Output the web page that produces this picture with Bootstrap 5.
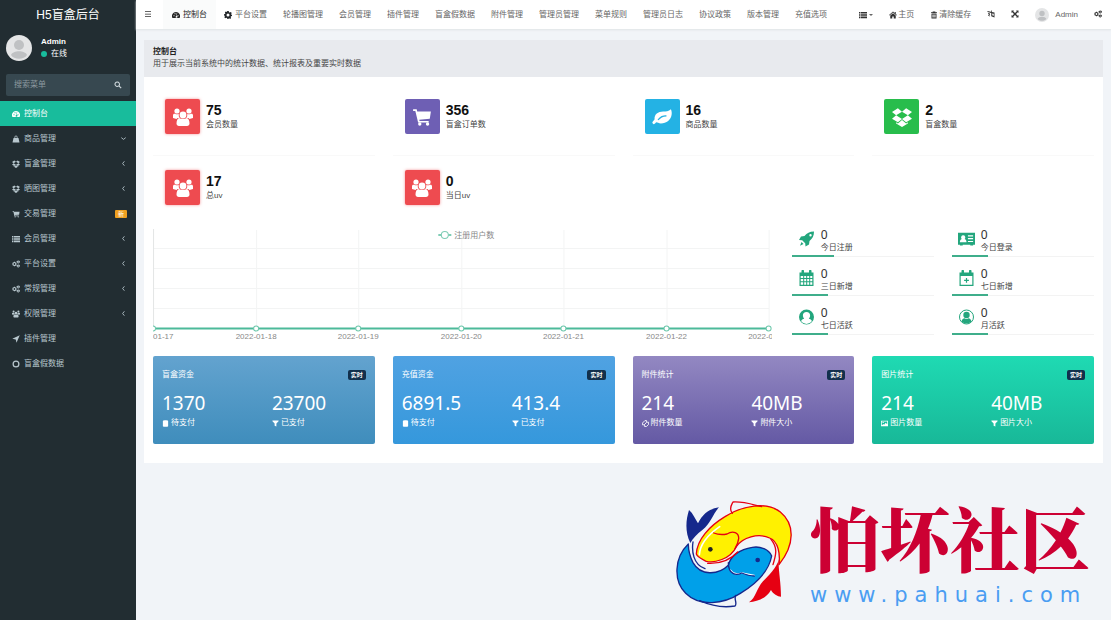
<!DOCTYPE html>
<html lang="zh-CN">
<head>
<meta charset="utf-8">
<meta name="viewport" content="width=device-width, initial-scale=1">
<title>H5盲盒后台</title>
<link href="https://cdn.jsdelivr.net/npm/bootstrap@5.3.0/dist/css/bootstrap.min.css" rel="stylesheet">
<style>
  body { font-family: "Liberation Sans", "Noto Sans CJK SC", sans-serif; font-size: 8px; line-height: 12px; color: #444; background: #f1f4f8; }
  a { color: inherit; text-decoration: none; }
  .ico { width: 8px; height: 8px; fill: currentColor; flex: none; }
  .side { width: 136px; flex: none; background: #222d32; color: #b8c7ce; }
  .side-brand { height: 29px; font-size: 12px; color: #fff; }
  .side-user { height: 38px; padding: 0 6px; gap: 9px; color: #fff; }
  .side-user .face { width: 26px; height: 26px; }
  .dot { width: 6px; height: 6px; background: #18bc9c; }
  .side-search { height: 22px; margin: 7px 6px 5px; padding: 0 8px; background: #374850; border-radius: 2px; color: #cfd8dc; }
  .side-search input { min-width: 0; border: 0; outline: 0; background: transparent; color: #fff; font-size: 8px; }
  .side-search input::placeholder { color: #8c999f; }
  .side-search button { border: 0; padding: 0; background: none; color: inherit; line-height: 0; }
  .side-menu a { height: 25px; padding: 0 9px 0 12px; gap: 4px; }
  .side-menu a.active { background: #18bc9c; color: #fff; }
  .side-menu .caret { width: 7px; height: 7px; fill: none; stroke: currentColor; }
  .tag-new { background: #f0a020; color: #fff; font-size: 6px; line-height: 8px; padding: 0 3px; border-radius: 1px; }
  .top { height: 29px; background: #fff; box-shadow: 0 1px 2px #dfe3e5; color: #666; }
  .top a, .top button { height: 29px; white-space: nowrap; }
  .top-tabs { gap: 16px; }
  .top-tabs a { gap: 3px; }
  .top-tabs .active { background: #fafbfb; color: #222; margin-left: -9px; padding: 0 9px; margin-right: -8px; }
  .top-tools { gap: 16px; padding-right: 9px; }
  .top-tools a { gap: 1px; }
  .top-tools .user { gap: 6px; }
  .top-tools .ico, .top .bars { color: #333; }
  .plain { border: 0; padding: 0; background: none; color: inherit; }
  .top .face { width: 14px; height: 14px; }
  .body-pad { padding: 11px 8px 0; }
  .intro { background: #e8eaee; padding: 6px 9px 8px; line-height: 11px; }
  .intro h1 { font-size: 8px; line-height: 12px; font-weight: 700; margin: 0; color: #222; }
  .panel { background: #fff; padding: 8px 9px 19px; }
  .quad { display: grid; grid-template-columns: repeat(4, 1fr); column-gap: 18px; }
  .stat { height: 71px; padding: 14px 12px 0; gap: 6px; align-items: flex-start; }
  .stat.ruled { box-shadow: 0 -1px 0 #f9f9f9 inset; }
  .tile { width: 35px; height: 35px; border-radius: 2px; color: #fff; flex: none; }
  .tile .ico { width: 20px; height: 20px; }
  .red { background: #ee4b50; box-shadow: 0 0 3px #ee4b5099; }
  .violet { background: #6e5fb4; }
  .sky { background: #24b2e4; }
  .green { background: #28bd4c; }
  .stat strong { display: block; font-size: 14px; line-height: 16px; color: #111; margin-top: 3px; }
  .stat div span { line-height: 14px; display: block; }
  .chart-row { display: grid; grid-template-columns: 618fr 322fr; }
  .chart-row svg.plot { width: 100%; display: block; margin-top: 1px; }
  .plot text { font-size: 8px; fill: #888; }
  .minis { display: grid; grid-template-columns: 1fr 1fr; column-gap: 18px; padding-left: 20px; margin-top: -9px; align-content: start; }
  .mini { height: 39px; padding: 10px 0 0 6px; gap: 6px; border-bottom: 1px solid #f3f3f3; position: relative; }
  .mini::after { content: ""; position: absolute; left: 0; bottom: -1px; width: 36px; height: 2px; background: #3fae8b; }
  .mini.wide::after { width: 42px; }
  .mini .ico { width: 17px; height: 16px; color: #23a67d; margin-top: 3px; }
  .mini b { display: block; font: 400 12px/14px "Noto Sans", sans-serif; color: #333; }
  .mini span { display: block; line-height: 11px; }
  .money { height: 88px; border-radius: 2px; color: #fff; padding: 12px 9px 0; }
  .money h2 { font-size: 8px; line-height: 14px; font-weight: 400; margin: 0; }
  .live { background: #12304c; font-size: 6px; line-height: 10px; padding: 0 3px; border-radius: 2px; font-weight: 700; }
  .money .fig { font: 400 19px/26px "Noto Sans", sans-serif; margin-top: 8px; }
  .money .cap { line-height: 14px; gap: 2px; }
  .money .ico { width: 7px; height: 7px; }
  .m1 { background: linear-gradient(#63a3cf, #3f8dbc); }
  .m2 { background: linear-gradient(#50a2e2, #3598dc); }
  .m3 { background: linear-gradient(#9388c2, #6459a4); }
  .m4 { background: linear-gradient(#1fdab3, #18b898); }
  .site { gap: 17px; padding: 0 21px 5px 0; }
  .site svg { width: 118px; height: 110px; }
  .site-name { font: 900 70px/76px "Noto Serif CJK SC", "Noto Sans CJK SC", serif; color: #cc0033; }
  .site-url { font: 400 21px/40px "DejaVu Sans", sans-serif; letter-spacing: 7px; color: #4a9df2; }
</style>
</head>
<body>
<svg class="d-none" xmlns="http://www.w3.org/2000/svg">
  <symbol id="i-dash" viewBox="0 0 16 16"><path fill-rule="evenodd" d="M8 2a8 8 0 0 0-7 12h14A8 8 0 0 0 8 2ZM3 8.500h2v2H3Zm2-4h2v2H5Zm6 4h2v2h-2ZM9.500 4l1 .5-1.500 5A2 2 0 1 1 7 12c0-1 .5-2 1.300-2.200Z"/></symbol>
  <symbol id="i-gear" viewBox="0 0 16 16"><path fill-rule="evenodd" d="M6.500 0h3l.5 2.300 1.500.7 2-1.200 2 2-1.200 2 .6 1.500L16 8v2l-2 .4-.7 1.500 1 2-2 2-2-1.300-1 .4-.5 1h-2L6 14l-1.500-.7-2 1L.7 12.500l1.100-2L1.500 9.500 0 9V6.500L2 6l.7-1.500-1-2 2-1.500 2 1.200Zm1.500 5a3 3 0 1 0 0 6 3 3 0 0 0 0-6Z"/></symbol>
  <symbol id="i-gears" viewBox="0 0 18 16"><path fill-rule="evenodd" d="M4.500 3h2l.4 1.500 1.300-.7L9.700 5.200 9 6.500l1.500.5v2L9 9.500l.7 1.300-1.500 1.500-1.300-.8L6.500 13h-2l-.4-1.500-1.300.7L1.300 10.800 2 9.500.5 9V7L2 6.500 1.300 5.200l1.500-1.400 1.300.7ZM5.500 6a2 2 0 1 0 0 4 2 2 0 0 0 0-4ZM13 0h2l.4 1.200 1.300-.3L18 2.500l-.8 1 .6 1.400-2.200.6L15 7h-2l-.6-1.500-1.900-.6.3-1.200-.8-1.200 1-1.500 1.500.3Zm1 2.200a1.300 1.300 0 1 0 0 2.600 1.300 1.300 0 0 0 0-2.600ZM13 9h2l.4 1.200 1.300-.3L18 11.500l-.8 1 .6 1.400-2.200.6L15 16h-2l-.6-1.500-1.900-.6.3-1.200-.8-1.200 1-1.500 1.500.3Zm1 2.200a1.300 1.300 0 1 0 0 2.600 1.300 1.300 0 0 0 0-2.600Z"/></symbol>
  <symbol id="i-bag" viewBox="0 0 16 16"><path d="M5 6V4a3 3 0 0 1 6 0v2h2l2 9H1l2-9Zm1.500 0h3V4a1.500 1.500 0 0 0-3 0Z" fill-rule="evenodd"/></symbol>
  <symbol id="i-box" viewBox="0 0 16 16"><path d="M4.700 1 8 3.700 3.300 6.600 0 4ZM11.300 1 16 4l-3.300 2.600L8 3.700ZM0 9.300l3.300-2.700L8 9.500l-3.300 2.700ZM16 9.300l-3.300-2.700L8 9.500l3.300 2.700ZM3.300 12.200l1.400.9L8 10.400l3.300 2.700 1.400-.9v1L8 16l-4.700-2.800Z"/></symbol>
  <symbol id="i-cart" viewBox="-1 -1 18 18"><path d="M0 1h3.200l.5 2H16l-1 6.500-9.500 1 .3 1H14V13H4.500L2 2.500H0Z"/><circle cx="6" cy="14.300" r="1.500"/><circle cx="13" cy="14.300" r="1.500"/></symbol>
  <symbol id="i-list" viewBox="0 0 16 16"><path d="M0 2h3v2.400H0Zm4 0h12v2.400H4ZM0 5.300h3v2.400H0Zm4 0h12v2.400H4ZM0 8.600h3V11H0Zm4 0h12V11H4ZM0 12h3v2.400H0Zm4 0h12v2.400H4Z"/></symbol>
  <symbol id="i-users" viewBox="0 0 20 18"><circle cx="4" cy="3" r="2.600"/><circle cx="16" cy="3" r="2.600"/><path d="M0 10V7.500C0 5.500 1.500 5.500 3 6.200h3C5.400 8 6 9.300 7 10H4.500L3.500 11ZM20 10V7.500c0-2-1.500-2-3-1.300h-3c.6 1.800 0 3.100-1 3.800h2.500l1 1Z"/><circle cx="10" cy="7" r="3.400"/><path d="M6.500 10c1 1 5 1.500 7 0 2 .3 3 2.500 3 5.500 0 1.500-1 2.500-2.500 2.500H6c-1.500 0-2.500-1-2.500-2.500 0-3 1-5.200 3-5.500Z"/></symbol>
  <symbol id="i-plane" viewBox="0 0 16 16"><path d="M15.500.5 9 15.500 7.500 9 .5 7.500Z"/></symbol>
  <symbol id="i-ring" viewBox="0 0 16 16"><path fill-rule="evenodd" d="M8 1a7 7 0 1 0 0 14A7 7 0 0 0 8 1Zm0 2.500a4.500 4.500 0 1 1 0 9 4.500 4.500 0 0 1 0-9Z"/></symbol>
  <symbol id="i-search" viewBox="0 0 16 16"><path fill-rule="evenodd" d="M6.500 1a5.500 5.500 0 1 0 3 10.100l4 4 1.700-1.700-4-4A5.500 5.500 0 0 0 6.500 1Zm0 2a3.500 3.500 0 1 1 0 7 3.500 3.500 0 0 1 0-7Z"/></symbol>
  <symbol id="i-bars" viewBox="0 0 16 16"><path d="M2 2.500h12V4H2Zm0 5h12V9H2Zm0 5h12V14H2Z"/></symbol>
  <symbol id="i-home" viewBox="0 0 16 16"><path d="M8 1 0 8l1 1 7-6 7 6 1-1-2.500-2.200V2h-2v2ZM8 4.300 2.500 9v6H6.500v-4h3v4h4V9Z"/></symbol>
  <symbol id="i-trash" viewBox="0 0 16 16"><path fill-rule="evenodd" d="M5.500 1h5l.5 1.500h3V4H2V2.500h3ZM3 5h10v10H3Zm2 2v6h1.500V7Zm2.300 0v6h1.400V7Zm2.200 0v6H11V7Z"/></symbol>
  <symbol id="i-lang" viewBox="0 0 16 16"><path d="M1 2 8 3.500V1h1.500v3L15 5v10L8.500 12.500V6L1 4ZM2 6l4 1v1.500L4.500 11 6 12v1L2 11l2-3-2-.5Zm8.500 1v4l1 .3V10l1 .3v1.500l1 .4V7.500Z" fill-rule="evenodd"/></symbol>
  <symbol id="i-expand" viewBox="0 0 16 16"><path d="M1 1h5L4.500 2.500 8 6l3.500-3.500L10 1h5v5l-1.500-1.500L10 8l3.500 3.500L15 10v5h-5l1.500-1.500L8 10l-3.500 3.500L6 15H1v-5l1.500 1.500L6 8 2.500 4.500 1 6Z"/></symbol>
  <symbol id="i-leaf" viewBox="0 0 18 16"><path fill-rule="evenodd" d="M17 1c-2 2-4.500 2-7 2C5.500 3 2 5.500 2.300 10c0 .8-2 2-2 3 0 .7.700 1.500 1.400 1.500 1 0 1.700-1.700 2.300-1.700 1 0 2 1 4 1 5 0 9.300-3.300 9.700-8.300C18 4 17.500 2 17 1ZM5 10.500c2.500-3.300 4.500-4 8-4v1c-3.500.2-5 1-7.200 3.500Z"/></symbol>
  <symbol id="i-rocket" viewBox="0 0 16 16"><path fill-rule="evenodd" d="M15.500.5C11 .5 8.500 2 6 5L2.500 5.500.5 9l3.200.2 3 3 .3 3.300 3.500-2 .5-3.500c3-2.500 4.500-5 4.500-9.500ZM12 3a1.200 1.200 0 1 1 0 2.400A1.200 1.200 0 0 1 12 3ZM3 11l2 2-3.500 1.700Z"/></symbol>
  <symbol id="i-idcard" viewBox="0 0 18 16"><path fill-rule="evenodd" d="M0 1.500h18v12.500h-2v.8h-3V14H5v.8H2V14H0ZM5.500 4a2.300 2.300 0 0 0-1.500 4C2.500 8.500 2 10 2 11.500h7C9 10 8.500 8.500 7 8a2.300 2.300 0 0 0-1.500-4ZM10.500 4v1.300H16V4Zm0 3v1.300H16V7Zm0 3v1.300H16V10Z"/></symbol>
  <symbol id="i-cal" viewBox="0 0 16 16"><path fill-rule="evenodd" d="M3 2.500V1a1.200 1.200 0 0 1 2.500 0v1.500h5V1A1.200 1.200 0 0 1 13 1v1.500h2V16H1V2.500ZM2.200 6v2h2.500V6Zm3.500 0v2h2V6Zm3 0v2h2V6Zm3 0v2h2.100V6ZM2.200 9v2.300h2.500V9Zm3.500 0v2.300h2V9Zm3 0v2.300h2V9Zm3 0v2.300h2.100V9ZM2.200 12.300v2.500h2.500v-2.500Zm3.500 0v2.500h2v-2.500Zm3 0v2.500h2v-2.500Zm3 0v2.500h2.100v-2.500Z"/></symbol>
  <symbol id="i-calplus" viewBox="0 0 16 16"><path fill-rule="evenodd" d="M3 2.500V1a1.200 1.200 0 0 1 2.500 0v1.500h5V1A1.200 1.200 0 0 1 13 1v1.500h2V16H1V2.500ZM2.200 6v8.800h11.600V6Zm5.200 2h1.200v1.800h1.800V11H8.600v1.800H7.400V11H5.600V9.800h1.800Z"/></symbol>
  <symbol id="i-face" viewBox="0 0 16 16"><path fill-rule="evenodd" d="M8 .5a7.500 7.500 0 1 0 0 15 7.500 7.500 0 0 0 0-15ZM8 3c2.300 0 3.600 1.500 3.600 3.500 0 1.300-.5 2.500-1.300 3.200 1.500.4 2.600 1 3.100 2.300A6.500 6.500 0 0 1 2.600 12c.5-1.300 1.600-1.900 3.100-2.300A4.500 4.500 0 0 1 4.400 6.500C4.400 4.500 5.700 3 8 3Z"/></symbol>
  <symbol id="i-person" viewBox="0 0 16 16"><circle cx="8" cy="8" r="7" fill="none" stroke="currentColor"/><circle cx="8" cy="6" r="3.200"/><path d="M3 12.500c.6-2.200 1.800-3 3-3.200 1 .8 3 .8 4 0 1.200.2 2.400 1 3 3.200a7 7 0 0 1-10 0Z"/></symbol>
  <symbol id="i-db" viewBox="0 0 16 16"><path d="M2 2c1-2 11-2 12 0v12c-1 2-11 2-12 0Z"/></symbol>
  <symbol id="i-filter" viewBox="0 0 16 16"><path d="M1 1h14v2l-5 5v7l-4-2V8L1 3Z"/></symbol>
  <symbol id="i-clip" viewBox="0 0 16 16"><path fill="none" stroke="currentColor" stroke-width="2" d="M1 7 7 1h3v5l-5 5H1Zm5 4v4h4l5-5V5h-4"/></symbol>
  <symbol id="i-image" viewBox="0 0 18 16"><path fill-rule="evenodd" d="M0 1h18v14H0Zm2 2v10l4-4 2 2 4-5 4 4V3Zm2 1h3v3H4Z"/></symbol>
  <symbol id="i-left" viewBox="0 0 8 8"><path d="M5 1.500 3 4l2 2.500"/></symbol>
  <symbol id="i-down" viewBox="0 0 8 8"><path d="M1.500 3 4 5l2.500-2"/></symbol>
  <symbol id="i-avatar" viewBox="0 0 26 26"><circle cx="13" cy="13" r="13" fill="#e4e5e6"/><circle cx="13" cy="10" r="5" fill="#bfc1c3"/><path d="M5 20c2-5 14-5 16 0-3 5-13 5-16 0Z" fill="#bfc1c3"/></symbol>
</svg>

<div class="d-flex min-vh-100">
  <aside class="side">
    <a href="#" class="side-brand d-flex align-items-center justify-content-center">H5盲盒后台</a>
    <div class="side-user d-flex align-items-center">
      <svg class="face"><use href="#i-avatar"/></svg>
      <div>
        <strong class="d-block">Admin</strong>
        <span class="d-flex align-items-center gap-1"><i class="dot rounded-circle"></i>在线</span>
      </div>
    </div>
    <form class="side-search d-flex align-items-center">
      <input class="flex-fill p-0" type="text" placeholder="搜索菜单" aria-label="搜索菜单">
      <button type="button" aria-label="搜索"><svg class="ico"><use href="#i-search"/></svg></button>
    </form>
    <nav class="side-menu d-flex flex-column">
      <a href="#" class="active d-flex align-items-center"><svg class="ico"><use href="#i-dash"/></svg>控制台</a>
      <a href="#" class="d-flex align-items-center"><svg class="ico"><use href="#i-bag"/></svg>商品管理<svg class="caret ms-auto"><use href="#i-down"/></svg></a>
      <a href="#" class="d-flex align-items-center"><svg class="ico"><use href="#i-box"/></svg>盲盒管理<svg class="caret ms-auto"><use href="#i-left"/></svg></a>
      <a href="#" class="d-flex align-items-center"><svg class="ico"><use href="#i-box"/></svg>晒图管理<svg class="caret ms-auto"><use href="#i-left"/></svg></a>
      <a href="#" class="d-flex align-items-center"><svg class="ico"><use href="#i-cart"/></svg>交易管理<span class="tag-new ms-auto">新</span></a>
      <a href="#" class="d-flex align-items-center"><svg class="ico"><use href="#i-list"/></svg>会员管理<svg class="caret ms-auto"><use href="#i-left"/></svg></a>
      <a href="#" class="d-flex align-items-center"><svg class="ico"><use href="#i-gears"/></svg>平台设置<svg class="caret ms-auto"><use href="#i-left"/></svg></a>
      <a href="#" class="d-flex align-items-center"><svg class="ico"><use href="#i-gears"/></svg>常规管理<svg class="caret ms-auto"><use href="#i-left"/></svg></a>
      <a href="#" class="d-flex align-items-center"><svg class="ico"><use href="#i-users"/></svg>权限管理<svg class="caret ms-auto"><use href="#i-left"/></svg></a>
      <a href="#" class="d-flex align-items-center"><svg class="ico"><use href="#i-plane"/></svg>插件管理</a>
      <a href="#" class="d-flex align-items-center"><svg class="ico"><use href="#i-ring"/></svg>盲盒假数据</a>
    </nav>
  </aside>

  <div class="flex-fill d-flex flex-column">
    <header class="top d-flex align-items-center justify-content-between">
      <div class="top-tabs d-flex align-items-center ps-2">
        <button class="plain bars me-1" type="button" aria-label="菜单"><svg class="ico"><use href="#i-bars"/></svg></button>
        <a href="#" class="active d-flex align-items-center"><svg class="ico"><use href="#i-dash"/></svg>控制台</a>
        <a href="#" class="d-flex align-items-center"><svg class="ico text-dark"><use href="#i-gear"/></svg>平台设置</a>
        <a href="#" class="d-flex align-items-center">轮播图管理</a>
        <a href="#" class="d-flex align-items-center">会员管理</a>
        <a href="#" class="d-flex align-items-center">插件管理</a>
        <a href="#" class="d-flex align-items-center">盲盒假数据</a>
        <a href="#" class="d-flex align-items-center">附件管理</a>
        <a href="#" class="d-flex align-items-center">管理员管理</a>
        <a href="#" class="d-flex align-items-center">菜单规则</a>
        <a href="#" class="d-flex align-items-center">管理员日志</a>
        <a href="#" class="d-flex align-items-center">协议政策</a>
        <a href="#" class="d-flex align-items-center">版本管理</a>
        <a href="#" class="d-flex align-items-center">充值选项</a>
      </div>
      <div class="top-tools d-flex align-items-center">
        <button class="plain dropdown-toggle d-flex align-items-center" type="button" aria-label="更多"><svg class="ico"><use href="#i-list"/></svg></button>
        <a href="#" class="d-flex align-items-center"><svg class="ico"><use href="#i-home"/></svg>主页</a>
        <a href="#" class="d-flex align-items-center"><svg class="ico"><use href="#i-trash"/></svg>清除缓存</a>
        <button class="plain" type="button" aria-label="语言"><svg class="ico"><use href="#i-lang"/></svg></button>
        <button class="plain" type="button" aria-label="全屏"><svg class="ico"><use href="#i-expand"/></svg></button>
        <a href="#" class="user d-flex align-items-center"><svg class="face"><use href="#i-avatar"/></svg>Admin</a>
        <button class="plain" type="button" aria-label="设置"><svg class="ico"><use href="#i-gears"/></svg></button>
      </div>
    </header>

    <main class="body-pad">
      <div class="intro">
        <h1>控制台</h1>
        用于展示当前系统中的统计数据、统计报表及重要实时数据
      </div>
      <div class="panel">
        <section class="quad">
          <div class="stat ruled d-flex"><span class="tile red d-flex align-items-center justify-content-center"><svg class="ico"><use href="#i-users"/></svg></span><div><strong>75</strong><span>会员数量</span></div></div>
          <div class="stat ruled d-flex"><span class="tile violet d-flex align-items-center justify-content-center"><svg class="ico"><use href="#i-cart"/></svg></span><div><strong>356</strong><span>盲盒订单数</span></div></div>
          <div class="stat ruled d-flex"><span class="tile sky d-flex align-items-center justify-content-center"><svg class="ico"><use href="#i-leaf"/></svg></span><div><strong>16</strong><span>商品数量</span></div></div>
          <div class="stat ruled d-flex"><span class="tile green d-flex align-items-center justify-content-center"><svg class="ico"><use href="#i-box"/></svg></span><div><strong>2</strong><span>盲盒数量</span></div></div>
          <div class="stat d-flex"><span class="tile red d-flex align-items-center justify-content-center"><svg class="ico"><use href="#i-users"/></svg></span><div><strong>17</strong><span>总uv</span></div></div>
          <div class="stat d-flex"><span class="tile red d-flex align-items-center justify-content-center"><svg class="ico"><use href="#i-users"/></svg></span><div><strong>0</strong><span>当日uv</span></div></div>
        </section>

        <section class="chart-row">
          <svg class="plot" viewBox="0 0 618 116" role="img" aria-label="注册用户数">
            <path d="M0 20.500H616M0 40.500H616M0 60.500H616M0 80.500H616M103.500 2V100M205.500 2V100M308.500 2V100M410.500 2V100M513.500 2V100M615.500 2V100" stroke="#f3f4f4" fill="none"/>
            <path d="M.5 1V100" stroke="#e4e6e6"/>
            <path d="M0 100.500H616" stroke="#4cba9a" stroke-width="2"/>
            <g fill="#fff" stroke="#6cc7ab"><circle cx="0" cy="100.500" r="2.500"/><circle cx="103" cy="100.500" r="2.500"/><circle cx="205" cy="100.500" r="2.500"/><circle cx="308" cy="100.500" r="2.500"/><circle cx="410" cy="100.500" r="2.500"/><circle cx="513" cy="100.500" r="2.500"/><circle cx="615" cy="100.500" r="2.500"/></g>
            <path d="M285 7H298" stroke="#7fcdb5" stroke-width="2"/><circle cx="291.500" cy="7" r="3.500" fill="#fff" stroke="#7fcdb5"/>
            <text x="301" y="10">注册用户数</text>
            <g text-anchor="middle"><text x="0" y="111">2022-01-17</text><text x="103" y="111">2022-01-18</text><text x="205" y="111">2022-01-19</text><text x="308" y="111">2022-01-20</text><text x="410" y="111">2022-01-21</text><text x="513" y="111">2022-01-22</text><text x="615" y="111">2022-01-23</text></g>
          </svg>
          <div class="minis">
            <div class="mini wide d-flex"><svg class="ico"><use href="#i-rocket"/></svg><div><b>0</b><span>今日注册</span></div></div>
            <div class="mini d-flex"><svg class="ico"><use href="#i-idcard"/></svg><div><b>0</b><span>今日登录</span></div></div>
            <div class="mini d-flex"><svg class="ico"><use href="#i-cal"/></svg><div><b>0</b><span>三日新增</span></div></div>
            <div class="mini d-flex"><svg class="ico"><use href="#i-calplus"/></svg><div><b>0</b><span>七日新增</span></div></div>
            <div class="mini d-flex"><svg class="ico"><use href="#i-face"/></svg><div><b>0</b><span>七日活跃</span></div></div>
            <div class="mini d-flex"><svg class="ico"><use href="#i-person"/></svg><div><b>0</b><span>月活跃</span></div></div>
          </div>
        </section>

        <section class="quad mt-2 pt-1">
          <div class="money m1">
            <div class="d-flex justify-content-between align-items-center"><h2>盲盒资金</h2><span class="live">实时</span></div>
            <div class="row g-0">
              <div class="col-6"><div class="fig">1370</div><div class="cap d-flex align-items-center"><svg class="ico"><use href="#i-db"/></svg>待支付</div></div>
              <div class="col-6 ps-2"><div class="fig">23700</div><div class="cap d-flex align-items-center"><svg class="ico"><use href="#i-filter"/></svg>已支付</div></div>
            </div>
          </div>
          <div class="money m2">
            <div class="d-flex justify-content-between align-items-center"><h2>充值资金</h2><span class="live">实时</span></div>
            <div class="row g-0">
              <div class="col-6"><div class="fig">6891.5</div><div class="cap d-flex align-items-center"><svg class="ico"><use href="#i-db"/></svg>待支付</div></div>
              <div class="col-6 ps-2"><div class="fig">413.4</div><div class="cap d-flex align-items-center"><svg class="ico"><use href="#i-filter"/></svg>已支付</div></div>
            </div>
          </div>
          <div class="money m3">
            <div class="d-flex justify-content-between align-items-center"><h2>附件统计</h2><span class="live">实时</span></div>
            <div class="row g-0">
              <div class="col-6"><div class="fig">214</div><div class="cap d-flex align-items-center"><svg class="ico"><use href="#i-clip"/></svg>附件数量</div></div>
              <div class="col-6 ps-2"><div class="fig">40MB</div><div class="cap d-flex align-items-center"><svg class="ico"><use href="#i-filter"/></svg>附件大小</div></div>
            </div>
          </div>
          <div class="money m4">
            <div class="d-flex justify-content-between align-items-center"><h2>图片统计</h2><span class="live">实时</span></div>
            <div class="row g-0">
              <div class="col-6"><div class="fig">214</div><div class="cap d-flex align-items-center"><svg class="ico"><use href="#i-image"/></svg>图片数量</div></div>
              <div class="col-6 ps-2"><div class="fig">40MB</div><div class="cap d-flex align-items-center"><svg class="ico"><use href="#i-filter"/></svg>图片大小</div></div>
            </div>
          </div>
        </section>
      </div>
    </main>

    <footer class="site d-flex align-items-start justify-content-end mt-auto">
      <svg viewBox="30 25 354 330" fill="none" stroke-linecap="round" stroke-linejoin="round">
        <!-- blue fish -->
        <path fill="#15288c" d="M76 157C60 125 62 90 72 58 84 68 90 84 99 98 112 70 134 54 162 50 142 72 138 98 112 118 96 130 84 142 76 157Z"/>
        <path fill="#00a0e9" stroke="#15288c" stroke-width="4" d="M70 160C28 200 24 270 62 308 104 350 176 340 226 308 272 280 312 240 320 196 312 176 286 166 262 170 226 176 196 194 190 224 160 254 106 256 84 216 74 196 70 176 70 160Z"/>
        <path stroke="#fff" stroke-width="4" d="M196 238C206 252 222 250 230 247L268 254"/>
        <path stroke="#15288c" stroke-width="4" d="M190 216C190 252 214 256 230 247 242 252 256 256 268 256M84 154C80 180 84 222 120 234M104 330C140 346 176 352 210 346 218 338 206 326 212 314"/>
        <circle cx="278" cy="208" r="7" fill="#15288c"/>
        <!-- yellow fish -->
        <path fill="#e60012" d="M342 206C338 232 348 268 348 318 338 318 324 310 318 298 302 326 276 332 252 335 274 320 274 294 294 272 312 254 334 232 342 206Z"/>
        <path fill="#fff100" stroke="#e60012" stroke-width="4" d="M94 190C96 146 134 106 180 78 232 44 306 32 346 64 390 100 390 162 342 222 346 190 340 152 314 142 280 126 232 140 214 168 196 206 146 218 124 212 108 204 98 200 94 190Z"/>
        <path stroke="#fff" stroke-width="5" d="M103 192C106 152 138 126 164 108"/>
        <path stroke="#e60012" stroke-width="4" d="M146 127C164 134 176 132 186 130 204 118 222 126 221 144 220 154 216 164 210 174M202 68C190 54 200 42 204 34 236 32 264 42 290 48M318 146C338 170 334 190 324 222M128 218C166 220 194 210 218 184"/>
        <circle cx="136" cy="176" r="7" fill="#222"/>
      </svg>
      <div>
        <div class="site-name">怕坏社区</div>
        <a class="site-url d-block" href="#">www.pahuai.com</a>
      </div>
    </footer>
  </div>
</div>
<script src="https://cdn.jsdelivr.net/npm/bootstrap@5.3.0/dist/js/bootstrap.bundle.min.js"></script>
</body>
</html>
